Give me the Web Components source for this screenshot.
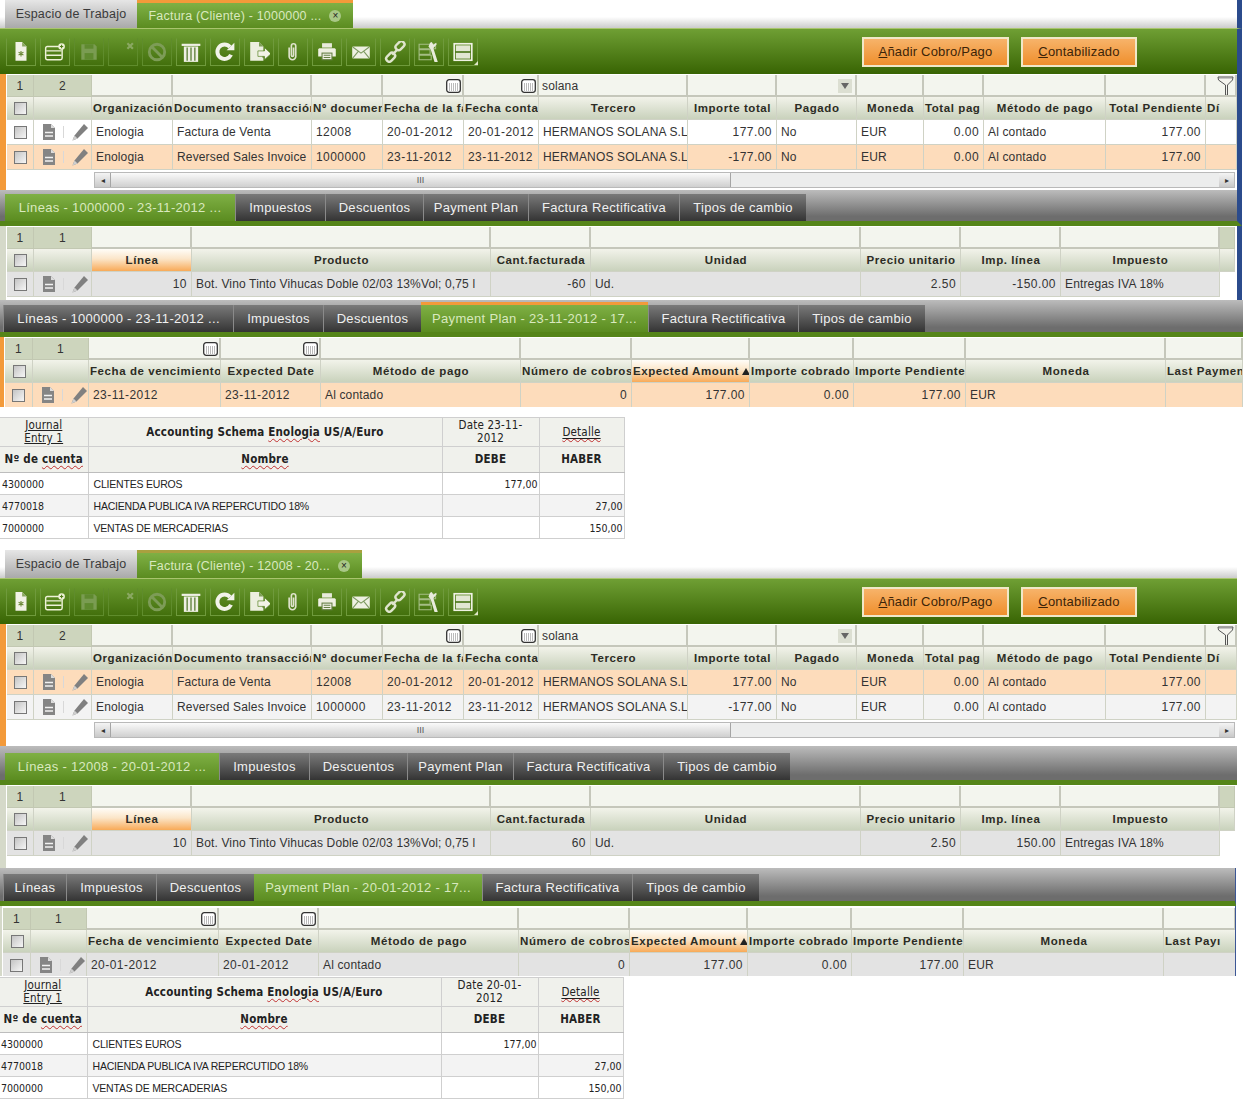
<!DOCTYPE html>
<html>
<head>
<meta charset="utf-8">
<style>
html, body { margin: 0; padding: 0; background: #fff; }
body { width: 1243px; height: 1105px; overflow: hidden; font-family: "Liberation Sans", Arial, sans-serif; }
.navy { box-sizing: border-box; width: 1242px; border-right: 5px solid #2b4b8c; }
</style>
</head>
<body>
<ob-screen>
    <ob-main-tabs class="navy" style="height:28px" active-top="#f39a3a">
        <ob-tab w="132" kind="plain">Espacio de Trabajo</ob-tab>
        <ob-tab w="216" kind="on" closable>Factura (Cliente) - 1000000 ...</ob-tab>
    </ob-main-tabs>
    <ob-toolbar class="navy"></ob-toolbar>
    <ob-grid class="navy" name="header1a" style="height:116px"></ob-grid>
    <ob-strip class="navy" style="height:36px;padding-left:5px">
        <ob-tab w="230" kind="on">L&iacute;neas - 1000000 - 23-11-2012 ...</ob-tab>
        <ob-tab w="90">Impuestos</ob-tab>
        <ob-tab w="98">Descuentos</ob-tab>
        <ob-tab w="105">Payment Plan</ob-tab>
        <ob-tab w="151">Factura Rectificativa</ob-tab>
        <ob-tab w="127">Tipos de cambio</ob-tab>
    </ob-strip>
    <ob-grid class="navy" name="lines1" style="height:74px"></ob-grid>
    <ob-strip style="height:37px;padding-left:3px">
        <ob-tab w="230">L&iacute;neas - 1000000 - 23-11-2012 ...</ob-tab>
        <ob-tab w="90">Impuestos</ob-tab>
        <ob-tab w="98">Descuentos</ob-tab>
        <ob-tab w="227" kind="on" top="#f39a3a">Payment Plan - 23-11-2012 - 17...</ob-tab>
        <ob-tab w="150">Factura Rectificativa</ob-tab>
        <ob-tab w="127">Tipos de cambio</ob-tab>
    </ob-strip>
    <ob-grid name="plan1" style="height:70px"></ob-grid>
    <acct-table date="23-11-" style="margin-top:10px;margin-bottom:11px"></acct-table>

    <ob-main-tabs style="height:28px;width:1237px" active-top="#a9a03f">
        <ob-tab w="132" kind="plain">Espacio de Trabajo</ob-tab>
        <ob-tab w="225" kind="on" closable>Factura (Cliente) - 12008 - 20...</ob-tab>
    </ob-main-tabs>
    <ob-toolbar style="width:1237px"></ob-toolbar>
    <ob-grid name="header1b" style="height:122px;width:1237px"></ob-grid>
    <ob-strip style="height:39px;width:1237px;padding-left:5px">
        <ob-tab w="214" kind="on">L&iacute;neas - 12008 - 20-01-2012 ...</ob-tab>
        <ob-tab w="90">Impuestos</ob-tab>
        <ob-tab w="98">Descuentos</ob-tab>
        <ob-tab w="106">Payment Plan</ob-tab>
        <ob-tab w="150">Factura Rectificativa</ob-tab>
        <ob-tab w="127">Tipos de cambio</ob-tab>
    </ob-strip>
    <ob-grid name="lines2" style="height:83px;width:1237px"></ob-grid>
    <ob-strip style="height:38px;width:1236px;padding-left:3px;border-right:1px solid #3c5796">
        <ob-tab w="63">L&iacute;neas</ob-tab>
        <ob-tab w="90">Impuestos</ob-tab>
        <ob-tab w="98">Descuentos</ob-tab>
        <ob-tab w="228" kind="on">Payment Plan - 20-01-2012 - 17...</ob-tab>
        <ob-tab w="150">Factura Rectificativa</ob-tab>
        <ob-tab w="127">Tipos de cambio</ob-tab>
    </ob-strip>
    <ob-grid name="plan2" style="height:70px;padding-top:2px;width:1236px;border-right:1px solid #3c5796"></ob-grid>
    <acct-table date="20-01-" style="margin-top:1px;margin-left:-1px"></acct-table>
</ob-screen>

<script>
const ICONS = {
    newdoc: `<path d="M5 1h6l4 4v13H5z" fill="#f1f2e6"/><path d="M11 1l4 4h-4z" fill="#8aa862"/><path d="M10 9v5M7.8 10.2l4.4 2.6M12.2 10.2l-4.4 2.6" stroke="#6d8a3a" stroke-width="1"/>`,
    newrow: `<rect x="1.500" y="5" width="15" height="12" rx="1.500" fill="none" stroke="#eef2d8" stroke-width="1.300"/><path d="M2 9h14M2 13h14" stroke="#eef2d8" stroke-width="1.300"/><circle cx="16" cy="5" r="3" fill="#eef2d8"/><path d="M16 3.400v3.200M14.500 5h3" stroke="#4f7d18"/>`,
    save: `<path d="M3 3h12l2 2v12H3z" fill="#7a9c52"/><rect x="6" y="3" width="8" height="4" fill="#5f8a2f"/><rect x="6" y="11" width="8" height="6" fill="#5f8a2f"/>`,
    undo: `<path d="M14 2l5 5M19 2l-5 5" stroke="#8aa862" stroke-width="2"/>`,
    cancel: `<circle cx="10" cy="10" r="7" fill="none" stroke="#7d9c57" stroke-width="2.600"/><path d="M5.500 5.500l9 9" stroke="#7d9c57" stroke-width="2.600"/>`,
    trash: `<path d="M1.500 3.500h17" stroke="#eeefe4" stroke-width="2"/><path d="M3.500 5h13v14h-13z" fill="#eeefe4"/><path d="M6.500 6v12M10 6v12M13.500 6v12" stroke="#5c7f38" stroke-width="1.200"/>`,
    refresh: `<path d="M15.500 12.500a6.500 6.500 0 1 1 -1-7" fill="none" stroke="#f2f3ea" stroke-width="3.600"/><path d="M11.500 8.500h7v-7z" fill="#f2f3ea"/>`,
    exportdoc: `<path d="M2 1h8l4 4v4h-1v6h1v3H2z" fill="#ecefdf"/><path d="M10 1l4 4h-4z" fill="#7f9f58"/><path d="M9 9h6V6l6 5.500-6 5.500v-3H9z" fill="#f2f3e6" stroke="#4f7d18" stroke-width=".6"/>`,
    clip: `<path d="M7 6v8a3 3 0 0 0 6 0V4.500a2 2 0 0 0-4 0V13a1 1 0 0 0 2 0V6" fill="none" stroke="#dfe3cc" stroke-width="1.500" transform="translate(-.5 0)"/>`,
    print: `<rect x="5.500" y="2" width="9" height="4" fill="#e8ebdc"/><path d="M3 6.500h14a1.500 1.500 0 0 1 1 1V14H2V7.500a1.500 1.500 0 0 1 1-1z" fill="#eef0e2"/><rect x="5.500" y="11" width="9" height="6" fill="#eef0e2" stroke="#667f47"/><path d="M7 13h6M7 15h6" stroke="#667f47"/>`,
    mail: `<rect x="2" y="5" width="16" height="11" rx="1" fill="#eef0e2"/><path d="M2.500 5.500L10 11l7.500-5.500M2.500 15.500L7.500 9.500M17.500 15.500L12.500 9.500" fill="none" stroke="#7d9a60"/>`,
    link: `<g fill="none" stroke="#dfe5cd" stroke-width="2.200"><rect x="10" y="1.500" width="9" height="5.500" rx="2.600" transform="rotate(-45 14.500 4.200)"/><rect x="1.500" y="12" width="9" height="5.500" rx="2.600" transform="rotate(-45 6 14.700)"/><path d="M7.500 12.500l5-5"/></g>`,
    tools: `<path d="M1 3h15v4H1zM1 8h10v4H1zM1 13h11v4H1z" fill="none" stroke="#a5bd85"/><path d="M11 1.500L9.500 5l2 2.500L15 19h3L14 6.500 17 3l-.5-1.500-2.500 2L12.500 1z" fill="#e8ebdc"/>`,
    pane: `<rect x="2" y="2.500" width="16" height="15" fill="none" stroke="#f0f2e4" stroke-width="1.500"/><rect x="3.500" y="4" width="13" height="5.500" fill="#e2e7d2"/><rect x="3.500" y="10.500" width="13" height="5.500" fill="#e2e7d2"/><path d="M3 10h14" stroke="#3f6a10" stroke-width="1"/>`
};

const CALENDAR = `<svg width="15" height="14" viewBox="0 0 15 14"><rect x=".7" y=".7" width="13.600" height="12.600" rx="2.500" fill="#fff" stroke="#333" stroke-width="1.300"/><path d="M3 5h9M3 7h9M3 9h9M3 11h9" stroke="#777" stroke-dasharray="1 1"/></svg>`;
const FUNNEL = `<svg width="17" height="21" viewBox="0 0 17 21"><path d="M1 2h15l-.5 3-5 5v10l-2 .5V10L1.500 5z" fill="#f4f4ee" stroke="#555"/><path d="M2 3h13" stroke="#999"/></svg>`;
const DOC_ICON = `<svg width="14" height="16" viewBox="0 0 14 16"><path d="M1 0h8l4 4v12H1z" fill="#858585"/><path d="M9 0l4 4H9z" fill="#ddd"/><path d="M3 8.500h8M3 12h8" stroke="#f2f2f2" stroke-width="1.300"/></svg>`;
const PEN_ICON = `<svg width="18" height="18" viewBox="0 0 18 18"><path d="M13 1l4 4L6.500 15.500l-5 2 2-5z" fill="#808080"/><path d="M1.500 17.500l2-5 3 3z" fill="#cfcfcf"/></svg>`;

const HEAD1_COLS = [7, 27, 58, 81, 139, 71, 81, 75, 149, 89, 80, 67, 60, 122, 100, 31];
const HEAD1_ROWS = [
    ["Enologia", "Factura de Venta", "12008", "20-01-2012", "20-01-2012", "HERMANOS SOLANA S.L", ">177.00", "No", "EUR", ">0.00", "Al contado", ">177.00", ""],
    ["Enologia", "Reversed Sales Invoice", "1000000", "23-11-2012", "23-11-2012", "HERMANOS SOLANA S.L", ">-177.00", "No", "EUR", ">0.00", "Al contado", ">177.00", ""]
];
function header(selected, rowFill) {
    return {
        cols: HEAD1_COLS, bar: "#f39a3a", counts: ["1", "2"],
        filters: ["", "", "", "cal", "cal", "solana", "", "sel", "", "", "", "", "fun"],
        heads: ["Organización", "Documento transacción", "Nº documen", "Fecha de la fa", "Fecha conta", "=Tercero", "=Importe total", "=Pagado", "=Moneda", "Total pag", "=Método de pago", "=Total Pendiente", "Dí"],
        rows: HEAD1_ROWS, selected, scroll: true, rowFill
    };
}
function lines(qty, total) {
    return {
        cols: [7, 27, 58, 100, 299, 100, 270, 100, 100, 159, 15], bar: "#d5d9c9", counts: ["1", "1"],
        filters: ["", "", "", "", "", "", ""],
        heads: ["*Línea", "=Producto", "=Cant.facturada", "=Unidad", "=Precio unitario", "=Imp. línea", "=Impuesto"],
        rows: [[">10", "Bot. Vino Tinto Vihucas Doble 02/03 13%Vol; 0,75 l", ">" + qty, "Ud.", ">2.50", ">" + total, "Entregas IVA 18%"]],
        rowFill: "#e3e3e3", tail: true
    };
}
function plan(date, cols, bar, fill, last) {
    return {
        cols, bar, counts: ["1", "1"],
        filters: ["cal", "cal", "", "", "", "", "", "", ""],
        heads: ["Fecha de vencimiento", "=Expected Date", "=Método de pago", "Número de cobros", "^Expected Amount", "Importe cobrado", "Importe Pendiente", "=Moneda", last],
        rows: [[date, date, "Al contado", ">0", ">177.00", ">0.00", ">177.00", "EUR", ""]],
        rowFill: fill
    };
}
const GRIDS = {
    header1a: header(1, "#fff"),
    header1b: header(0, "#f3f3f3"),
    lines1: lines("-60", "-150.00"),
    lines2: lines("60", "150.00"),
    plan1: plan("23-11-2012", [5, 28, 56, 132, 100, 200, 111, 118, 104, 112, 200, 77], "#f39a3a", "#fddcbb", "Last Paymen"),
    plan2: plan("20-01-2012", [3, 28, 56, 132, 100, 200, 111, 118, 104, 112, 200, 72], "#d5d9c9", "#e3e3e3", "Last Payı")
};

const tabTemplate = document.createElement("template");
tabTemplate.innerHTML = `
<style>
:host {
    display: flex;
    align-items: center;
    justify-content: center;
    box-sizing: border-box;
    height: 100%;
    font-size: 13px;
    letter-spacing: .3px;
    white-space: nowrap;
    color: #f0f0f0;
    background: linear-gradient(#7a7a7a, #343434);
    border-left: 1px solid #8a8a8a;
}
:host([kind="on"]) {
    color: #d9e9bf;
    background: linear-gradient(#7fb045, #5b8c20);
    border-left: 0;
}
:host([kind="plain"]) {
    color: #3a3a3a;
    background: linear-gradient(#e6e6e6, #a9a9a9);
    border-left: 0;
}
.x {
    display: none;
    width: 12px;
    height: 12px;
    margin-left: 8px;
    border-radius: 50%;
    background: #a9c886;
    color: #222;
    font-size: 10px;
    line-height: 12px;
    text-align: center;
    letter-spacing: 0;
}
:host([closable]) .x { display: block; }
</style>
<slot></slot><span class="x">×</span>`;

class ObTab extends HTMLElement {
    constructor() {
        super();
        this.attachShadow({mode: "open"});
        this.shadowRoot.appendChild(tabTemplate.content.cloneNode(true));
    }
    connectedCallback() {
        this.style.width = this.getAttribute("w") + "px";
        if(this.hasAttribute("top")) {
            this.style.borderTop = "3px solid " + this.getAttribute("top");
            this.style.height = "calc(100% + 3px)";
            this.style.marginTop = "-3px";
        }
    }
}

const mainTabsTemplate = document.createElement("template");
mainTabsTemplate.innerHTML = `
<style>
:host {
    display: flex;
    box-sizing: border-box;
    padding-left: 5px;
    background: linear-gradient(#fff 60%, #ccc);
}
::slotted(ob-tab) {
    font-size: 12.5px;
    letter-spacing: .2px;
}
</style>
<slot></slot>`;

class ObMainTabs extends HTMLElement {
    constructor() {
        super();
        this.attachShadow({mode: "open"});
        this.shadowRoot.appendChild(mainTabsTemplate.content.cloneNode(true));
    }
    connectedCallback() {
        const on = this.querySelector('[kind="on"]');
        on.style.borderTop = "3px solid " + this.getAttribute("active-top");
    }
}

const stripTemplate = document.createElement("template");
stripTemplate.innerHTML = `
<style>
:host {
    display: flex;
    flex-flow: column nowrap;
    justify-content: flex-end;
    box-sizing: border-box;
    background: linear-gradient(#bcbcbc, #6d6d6d 85%);
    border-bottom: 5px solid #558519;
}
.tabs {
    display: flex;
    height: 27px;
}
</style>
<div class="tabs"><slot></slot></div>`;

class ObStrip extends HTMLElement {
    constructor() {
        super();
        this.attachShadow({mode: "open"});
        this.shadowRoot.appendChild(stripTemplate.content.cloneNode(true));
    }
}

const TOOLS = [
    ["newdoc"], ["newrow"], ["save", 1], ["undo", 1], ["cancel", 1], ["trash"], ["refresh"],
    ["exportdoc"], ["clip"], ["print"], ["mail"], ["link"], ["tools"], ["pane"]
];
const toolbarTemplate = document.createElement("template");
toolbarTemplate.innerHTML = `
<style>
:host {
    display: flex;
    align-items: center;
    box-sizing: border-box;
    height: 46px;
    padding: 0 100px 0 6px;
    background: linear-gradient(#6f9f34, #386403);
    border-top: 1px solid #a9c56e;
}
.tool {
    position: relative;
    box-sizing: border-box;
    display: flex;
    align-items: center;
    justify-content: center;
    width: 30px;
    height: 28px;
    margin-right: 4px;
    border: 1px solid #6f9a3c;
    border-top-color: transparent;
}
.tool.off { border-color: #5f8c2c; border-top-color: transparent; }
.tool svg { width: 22px; height: 22px; }
.corner {
    position: absolute;
    right: -1px;
    bottom: 0;
    width: 0;
    height: 0;
    border-left: 4px solid transparent;
    border-bottom: 4px solid #dfe7c8;
}
.spacer { flex: 1; }
button {
    box-sizing: border-box;
    height: 30px;
    margin-left: 12px;
    padding: 0;
    font: 13px "Liberation Sans", Arial, sans-serif;
    letter-spacing: .2px;
    color: #3c2408;
    border: 2px solid #f0e8c8;
    background: linear-gradient(#f7b36a, #ef8f2c);
}
u { text-underline-offset: 1px; }
</style>
<div class="spacer"></div>
<button style="width:147px"><u>A</u>ñadir Cobro/Pago</button>
<button style="width:116px"><u>C</u>ontabilizado</button>`;

class ObToolbar extends HTMLElement {
    constructor() {
        super();
        this.attachShadow({mode: "open"});
        this.shadowRoot.appendChild(toolbarTemplate.content.cloneNode(true));
    }
    connectedCallback() {
        const spacer = this.shadowRoot.querySelector(".spacer");
        for(const [name, off] of TOOLS) {
            const tool = document.createElement("div");
            tool.className = off ? "tool off" : "tool";
            tool.innerHTML = `<svg viewBox="0 0 20 20">${ICONS[name]}</svg>` + (name === "pane" ? `<span class="corner"></span>` : "");
            this.shadowRoot.insertBefore(tool, spacer);
        }
    }
}

const gridTemplate = document.createElement("template");
gridTemplate.innerHTML = `
<style>
:host {
    display: block;
    box-sizing: border-box;
    overflow: hidden;
    background: #fff;
    padding-top: 1px;
    position: relative;
}
.bar {
    position: absolute;
    left: 0;
    top: 0;
    bottom: 0;
}
.table { display: grid; position: relative; grid-template-rows: 22px 23px; grid-auto-rows: 25px; }
.table > div {
    box-sizing: border-box;
    overflow: hidden;
    white-space: nowrap;
    display: flex;
    align-items: center;
    border-right: 1px solid #cfd2c5;
    border-bottom: 1px solid #cfd2c5;
    font-size: 12px;
    letter-spacing: .15px;
    color: #333;
}
.table > .num { letter-spacing: .45px; }
.count { background: #cdd5bd; justify-content: center; border-color: #c2c8b2 !important; }
.filter {
    background: #f3f5ee;
    border-right: 2px solid #c5c7bb !important;
    border-bottom: 2px solid #c5c7bb !important;
    padding: 1px 0 0 3px;
    justify-content: flex-start;
}
.filter svg { margin-left: auto; margin-right: 1px; flex: none; }
.filter .drop {
    display: flex;
    align-items: center;
    justify-content: center;
    margin-left: auto;
    margin-right: 3px;
    width: 14px;
    height: 14px;
    background: #dcdfd2;
}
.filter .drop::after {
    content: "";
    border-left: 4px solid transparent;
    border-right: 4px solid transparent;
    border-top: 6px solid #666;
}
.table > .head {
    background: linear-gradient(#f2f3ea, #c9d2bc);
    font-weight: bold;
    font-size: 11.5px;
    letter-spacing: .58px;
    color: #2c2c24;
    padding-left: 1px;
}
.table > .head.c { justify-content: center; }
.table > .head.sort { background: linear-gradient(#fffdf8, #fbe5c8 45%, #f8aa58); }
.cell { padding: 0 4px; }
.cell.r { justify-content: flex-end; padding-right: 4px; }
.mark {
    box-sizing: border-box;
    width: 13px;
    height: 13px;
    border: 1px solid #777;
    background: linear-gradient(135deg, #c4c4c4, #f6f6f6);
}
.tick { justify-content: center; }
.acts { gap: 7px; padding-left: 8px; }
.sep { width: 1px; height: 12px; background: #d8d8d8; }
.arrow { width: 0; height: 0; border-left: 4px solid transparent; border-right: 4px solid transparent; border-bottom: 7px solid #222; margin-left: 3px; flex: none; }
.scroll {
    display: flex;
    box-sizing: border-box;
    height: 16px;
    margin-top: 2px;
    margin-left: 94px;
    width: 1141px;
    background: #eceded;
    border: 1px solid #b9b9b9;
}
.btn { width: 15px; background: linear-gradient(#f4f4f4, #c9c9c9); display: flex; align-items: center; justify-content: center; font-size: 8px; color: #333; flex: none; }
.thumb { width: 619px; background: linear-gradient(#fafafa, #cfcfcf); border: 1px solid #a5a5a5; border-width: 0 1px; text-align: center; font-size: 9px; line-height: 14px; color: #555; letter-spacing: 0; flex: none; }
.track { flex: 1; }
</style>
<div class="bar"></div>
<div class="table"></div>
<div class="scroll"><span class="btn">◂</span><span class="thumb">III</span><span class="track"></span><span class="btn">▸</span></div>`;

class ObGrid extends HTMLElement {
    constructor() {
        super();
        this.attachShadow({mode: "open"});
        this.shadowRoot.appendChild(gridTemplate.content.cloneNode(true));
    }

    connectedCallback() {
        const config = GRIDS[this.getAttribute("name")];
        const [pad, ...widths] = config.cols;
        const table = this.shadowRoot.querySelector(".table");
        const bar = this.shadowRoot.querySelector(".bar");
        bar.style.width = (pad - 1) + "px";
        bar.style.background = config.bar;
        table.style.marginLeft = pad + "px";
        table.style.gridTemplateColumns = widths.map(w => w + "px").join(" ");

        if(!config.scroll) {
            this.shadowRoot.querySelector(".scroll").style.display = "none";
        }

        // filter row
        this.add(table, "count", config.counts[0]);
        this.add(table, "count", config.counts[1]);
        config.filters.forEach(f => {
            const cell = this.add(table, "filter", "");
            if(f === "cal") cell.innerHTML = CALENDAR;
            else if(f === "sel") cell.innerHTML = `<span class="drop"></span>`;
            else if(f === "fun") cell.innerHTML = FUNNEL;
            else cell.textContent = f;
        });
        if(config.tail) this.add(table, "count", "");

        // header row: "=" centred, "*" sorted and centred, "^" sorted with an arrow
        this.add(table, "head tick", `<span class="mark"></span>`);
        this.add(table, "head", "");
        config.heads.forEach(h => {
            let cls = "head";
            let text = h;
            let arrow = "";
            if(h[0] === "=") {
                cls += " c";
                text = h.slice(1);
            }
            else if(h[0] === "*") {
                cls += " c sort";
                text = h.slice(1);
            }
            else if(h[0] === "^") {
                cls += " sort";
                text = h.slice(1);
                arrow = `<span class="arrow"></span>`;
            }
            this.add(table, cls, text + arrow);
        });
        if(config.tail) this.add(table, "head", "");

        // data rows: ">" right aligned
        config.rows.forEach((row, i) => {
            const fill = config.selected === i ? "#fddcbb" : config.rowFill;
            const rowEls = [];
            rowEls.push(this.add(table, "tick", `<span class="mark"></span>`));
            rowEls.push(this.add(table, "acts", DOC_ICON + `<span class="sep"></span>` + PEN_ICON));
            row.forEach(value => {
                const right = value[0] === ">";
                const text = right ? value.slice(1) : value;
                const num = /^-?[\d.-]+$/.test(text) ? " num" : "";
                rowEls.push(this.add(table, (right ? "cell r" : "cell") + num, text));
            });
            rowEls.forEach(el => {
                el.style.background = fill;
            });
        });
    }

    add(table, cls, html) {
        const el = document.createElement("div");
        el.className = cls;
        el.innerHTML = html;
        table.appendChild(el);
        return el;
    }
}

const acctTemplate = document.createElement("template");
acctTemplate.innerHTML = `
<style>
:host { display: block; width: 625px; }
table {
    border-collapse: collapse;
    table-layout: fixed;
    width: 624px;
    color: #222;
    font-family: "DejaVu Sans Condensed", "DejaVu Sans", sans-serif;
    font-stretch: condensed;
}
td, th { border: 1px solid #cfcfcf; border-left: 0; padding: 0 2px; overflow: hidden; white-space: nowrap; box-sizing: border-box; }
th {
    background: #f0f1ec;
    font-size: 11.5px;
    font-weight: normal;
    line-height: 13px;
    letter-spacing: .2px;
}
tr.a th { height: 29px; }
tr.a .lead { font-weight: bold; }
tr.b th { height: 26px; border-bottom: 1px solid #bdbdbd; font-weight: bold; }
td { height: 22px; font-size: 10.5px; }
td.name { font-family: "Liberation Sans", Arial, sans-serif; padding-left: 5px; letter-spacing: -.2px; }
td.r { text-align: right; padding-right: 1px; }
tr.s td { background: #f3f3f3; }
.wave { text-decoration: underline wavy #c03030 1px; text-underline-offset: 2px; }
</style>
<table>
<colgroup><col style="width:88px"><col style="width:354px"><col style="width:97px"><col style="width:85px"></colgroup>
<tr class="a">
    <th><u>Journal<br>Entry 1</u></th>
    <th><span class="lead">Accounting Schema <span class="wave">Enologia</span> US/A/Euro</span></th>
    <th><span class="date"></span><br>2012</th>
    <th><span class="wave"><u>Detalle</u></span></th>
</tr>
<tr class="b">
    <th>Nº de <span class="wave">cuenta</span></th>
    <th><span class="wave">Nombre</span></th>
    <th>DEBE</th>
    <th>HABER</th>
</tr>
<tr><td>4300000</td><td class="name">CLIENTES EUROS</td><td class="r">177,00</td><td></td></tr>
<tr class="s"><td>4770018</td><td class="name">HACIENDA PUBLICA IVA REPERCUTIDO 18%</td><td></td><td class="r">27,00</td></tr>
<tr><td>7000000</td><td class="name">VENTAS DE MERCADERIAS</td><td></td><td class="r">150,00</td></tr>
</table>`;

class AcctTable extends HTMLElement {
    constructor() {
        super();
        this.attachShadow({mode: "open"});
        this.shadowRoot.appendChild(acctTemplate.content.cloneNode(true));
    }
    connectedCallback() {
        this.shadowRoot.querySelector(".date").textContent = "Date " + this.getAttribute("date");
    }
}

const screenTemplate = document.createElement("template");
screenTemplate.innerHTML = `
<style>
:host { display: flex; flex-flow: column nowrap; width: 1243px; }
</style>
<slot></slot>`;

class ObScreen extends HTMLElement {
    constructor() {
        super();
        this.attachShadow({mode: "open"});
        this.shadowRoot.appendChild(screenTemplate.content.cloneNode(true));
    }
}

customElements.define("ob-tab", ObTab);
customElements.define("ob-main-tabs", ObMainTabs);
customElements.define("ob-strip", ObStrip);
customElements.define("ob-toolbar", ObToolbar);
customElements.define("ob-grid", ObGrid);
customElements.define("acct-table", AcctTable);
customElements.define("ob-screen", ObScreen);
</script>
</body>
</html>
